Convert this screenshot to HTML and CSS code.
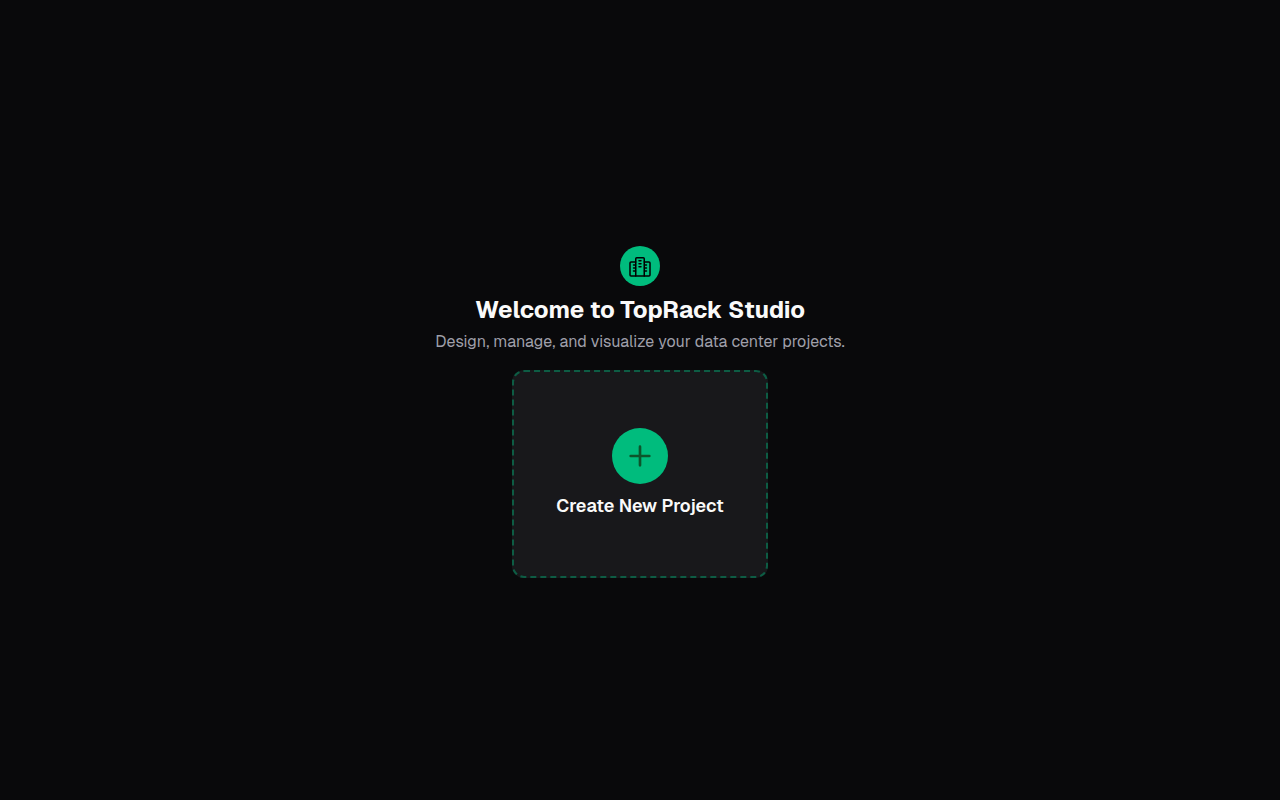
FILE: index.html
```html
<!DOCTYPE html>
<html lang="en">
<head>
<meta charset="utf-8">
<meta name="viewport" content="width=device-width, initial-scale=1">
<title>TopRack Studio</title>
<link rel="stylesheet" href="styles.css">
</head>
<body>
<main class="welcome">
  <header class="intro">
    <span class="logo">
      <svg class="logo-icon" viewBox="0 0 24 24" aria-hidden="true">
        <path d="M7.75 22V4.75a1 1 0 0 1 1-1h6.5a1 1 0 0 1 1 1V22"/>
        <path d="M7.75 8H3a1 1 0 0 0-1 1v12a1 1 0 0 0 1 1h18a1 1 0 0 0 1-1V9a1 1 0 0 0-1-1h-4.75"/>
        <path d="M5.5 11h2M5.5 14h2M5.5 17h2M16.500 11h2M16.500 14h2M16.500 17h2"/>
        <path d="M11 6.750h2M11 9.750h2M11 12.750h2"/>
      </svg>
    </span>
    <h1 class="title">Welcome to TopRack Studio</h1>
    <p class="subtitle">Design, manage, and visualize your data center projects.</p>
  </header>
  <button class="create-card" type="button">
    <span class="create-badge">
      <svg class="create-icon" viewBox="0 0 24 24" aria-hidden="true"><path d="M5 12h14M12 5v14"/></svg>
    </span>
    <span class="create-label">Create New Project</span>
  </button>
</main>
</body>
</html>
```
FILE: styles.css
```css
* { box-sizing: border-box; }
body {
  margin: 0;
  background: #09090b;
  color: #fafafa;
  font-family: Geist, Inter, "Liberation Sans", sans-serif;
}
.welcome {
  min-height: 100vh;
  padding: 24px 16px 0;
  display: flex;
  flex-direction: column;
  align-items: center;
  justify-content: center;
  gap: 16px;
}
.intro {
  display: flex;
  flex-direction: column;
  align-items: center;
  text-align: center;
}
.logo, .create-badge {
  display: flex;
  align-items: center;
  justify-content: center;
  border-radius: 50%;
  background: #00bc7d;
}
.logo { width: 40px; height: 40px; margin-bottom: 8px; }
.logo-icon {
  width: 24px;
  height: 24px;
  fill: none;
  stroke: #000;
  stroke-width: 1.5;
  stroke-linecap: round;
  stroke-linejoin: round;
}
.title { margin: 0 0 4px; font-size: 24px; line-height: 32px; font-weight: 700; }
.subtitle { margin: 0; font-size: 16px; line-height: 24px; color: #9f9fa9; }
.create-card {
  width: 256px;
  min-height: 208px;
  display: flex;
  flex-direction: column;
  align-items: center;
  justify-content: center;
  gap: 8px;
  border: 2px dashed #0d5c44;
  border-radius: 12px;
  background: #18181b;
  color: inherit;
  font: inherit;
  cursor: pointer;
}
.create-badge { width: 56px; height: 56px; }
.create-icon {
  width: 32px;
  height: 32px;
  fill: none;
  stroke: #0d542b;
  stroke-width: 2;
  stroke-linecap: round;
}
.create-label { font-size: 18px; line-height: 28px; font-weight: 600; }
```
